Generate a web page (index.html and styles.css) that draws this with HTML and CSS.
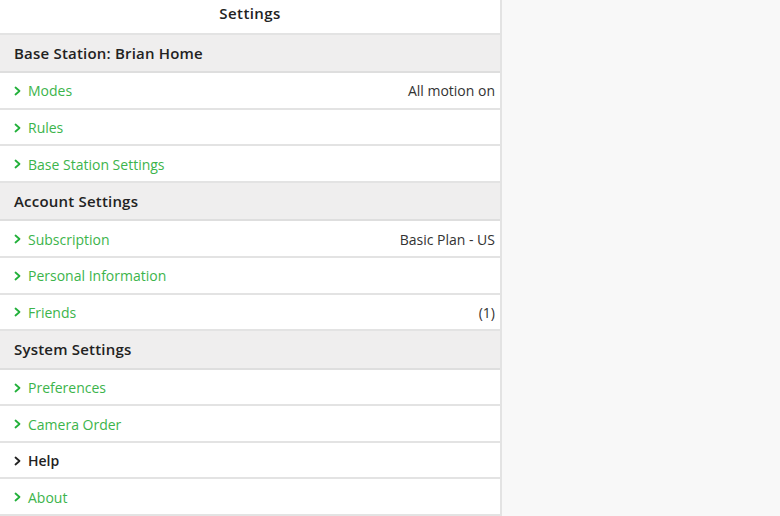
FILE: index.html
```html
<!DOCTYPE html>
<html>
<head>
<meta charset="utf-8">
<link rel="stylesheet" href="styles.css">
</head>
<body>
<div class="page">
  <div class="panel">
    <div class="title">Settings</div>
    <div class="section">Base Station: Brian Home</div>
    <div class="row"><span class="chev"><svg viewBox="0 0 8 10" width="8" height="10"><polyline points="1.5,1.5 5.5,5 1.5,8.5" /></svg></span><span class="label">Modes</span><span class="value">All motion on</span></div>
    <div class="row"><span class="chev"><svg viewBox="0 0 8 10" width="8" height="10"><polyline points="1.5,1.5 5.5,5 1.5,8.5" /></svg></span><span class="label">Rules</span></div>
    <div class="row"><span class="chev"><svg viewBox="0 0 8 10" width="8" height="10"><polyline points="1.5,1.5 5.5,5 1.5,8.5" /></svg></span><span class="label">Base Station Settings</span></div>
    <div class="section">Account Settings</div>
    <div class="row"><span class="chev"><svg viewBox="0 0 8 10" width="8" height="10"><polyline points="1.5,1.5 5.5,5 1.5,8.5" /></svg></span><span class="label">Subscription</span><span class="value">Basic Plan - US</span></div>
    <div class="row"><span class="chev"><svg viewBox="0 0 8 10" width="8" height="10"><polyline points="1.5,1.5 5.5,5 1.5,8.5" /></svg></span><span class="label">Personal Information</span></div>
    <div class="row"><span class="chev"><svg viewBox="0 0 8 10" width="8" height="10"><polyline points="1.5,1.5 5.5,5 1.5,8.5" /></svg></span><span class="label">Friends</span><span class="value">(1)</span></div>
    <div class="section">System Settings</div>
    <div class="row"><span class="chev"><svg viewBox="0 0 8 10" width="8" height="10"><polyline points="1.5,1.5 5.5,5 1.5,8.5" /></svg></span><span class="label">Preferences</span></div>
    <div class="row"><span class="chev"><svg viewBox="0 0 8 10" width="8" height="10"><polyline points="1.5,1.5 5.5,5 1.5,8.5" /></svg></span><span class="label">Camera Order</span></div>
    <div class="row dark"><span class="chev"><svg viewBox="0 0 8 10" width="8" height="10"><polyline points="1.5,1.5 5.5,5 1.5,8.5" /></svg></span><span class="label">Help</span></div>
    <div class="row"><span class="chev"><svg viewBox="0 0 8 10" width="8" height="10"><polyline points="1.5,1.5 5.5,5 1.5,8.5" /></svg></span><span class="label">About</span></div>
  </div>
  <div class="side"></div>
</div>
</body>
</html>
```
FILE: styles.css
```css
* { box-sizing: border-box; }
html, body { margin: 0; padding: 0; }
body {
  font-family: "Open Sans", "Liberation Sans", sans-serif;
  font-size: 14px;
  color: #2b2b2b;
  background: #f8f8f8;
  width: 780px;
  height: 516px;
  overflow: hidden;
}
.page { display: flex; height: 516px; }
.panel {
  width: 502px;
  background: #fff;
  border-right: 2px solid #e3e3e3;
  display: flex;
  flex-direction: column;
}
.side { flex: 1; background: #f8f8f8; }
.title {
  height: 35px;
  border-bottom: 2px solid #e3e3e3;
  display: flex;
  align-items: center;
  justify-content: center;
  font-weight: 600;
  font-size: 15px;
  letter-spacing: 0.4px;
  color: #222;
  padding-bottom: 6px;
}
.section {
  height: 39px;
  background: #efeeee;
  border-bottom: 2px solid #dedede;
  display: flex;
  align-items: center;
  padding-left: 14px;
  font-weight: 600;
  font-size: 15px;
  letter-spacing: 0.2px;
  color: #222;
}
.row {
  height: 37px;
  border-bottom: 2px solid #e3e3e3;
  display: flex;
  align-items: center;
  padding: 1px 5px 0 14px;
  color: #3cb44b;
}
.chev { display: flex; width: 14px; }
.chev svg { fill: none; stroke: #22b03a; stroke-width: 1.8; stroke-linecap: round; stroke-linejoin: round; }
.dark { color: #222; font-weight: 600; }
.dark .chev svg { stroke: #222; }
.label { flex: 1; }
.value { color: #333; }
```
